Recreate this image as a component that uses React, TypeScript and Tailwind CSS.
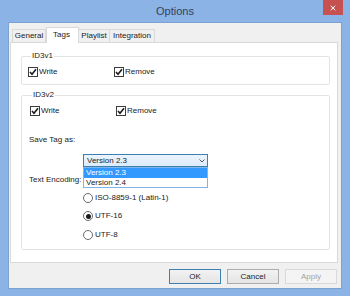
import { X } from 'lucide-react';

const Check = () => (
  <span className="w-[10px] h-[10px] border border-[#3c3c3c] bg-white flex items-center justify-center shrink-0">
    <svg width="8" height="8" viewBox="0 0 8 8">
      <path d="M1 4 L3 6.2 L7 1.2" fill="none" stroke="#1a1a1a" strokeWidth="1.6" />
    </svg>
  </span>
);

const Radio = ({ on }: { on?: boolean }) => (
  <span className="w-[10px] h-[10px] rounded-full border border-[#6b6b6b] bg-white flex items-center justify-center shrink-0">
    {on && <span className="w-[5px] h-[5px] rounded-full bg-[#1c1c1c]" />}
  </span>
);

const CheckRow = ({ first }: { first: string }) => (
  <div className="flex items-center h-[10px]">
    <div className="flex items-center gap-[1px] w-[86px]">
      <Check />
      <span>{first}</span>
    </div>
    <div className="flex items-center gap-[1px]">
      <Check />
      <span>Remove</span>
    </div>
  </div>
);

const tabs = ['General', 'Tags', 'Playlist', 'Integration'];

const App = () => {
  return (
    <div
      className="w-[350px] h-[296px] bg-[#8cb3e6] flex flex-col px-[8px] pb-[7px] text-[8px] leading-[10px] text-[#222]"
      style={{ fontFamily: '"Liberation Sans", Arial, sans-serif' }}
    >
      {/* Title bar */}
      <div className="h-[22px] relative flex items-center justify-center">
        <span className="text-[11px] text-[#34425a] -mt-[1px]">Options</span>
        <div className="absolute right-[-1px] top-0 w-[20px] h-[15px] bg-[#c75050] flex items-center justify-center">
          <X className="w-[8px] h-[8px] text-white" strokeWidth={3} />
        </div>
      </div>

      {/* Client area */}
      <div className="flex-1 bg-[#f0f0f0] border border-[#7ea2d0] flex flex-col pt-[4px] pl-[1px] pr-[3px] pb-[4px]">
        {/* Tabs */}
        <div className="flex items-end h-[15px] pl-[2px] relative z-10">
          {tabs.map((t) => (
            <div
              key={t}
              className={
                t === 'Tags'
                  ? 'h-[16px] -mb-[1px] bg-white border border-b-0 border-[#d9d9d9] px-[6px] pt-[2px] w-[33px] flex justify-start'
                  : 'h-[13px] bg-[#f0f0f0] border border-b-0 border-[#d9d9d9] px-[3px] flex items-center justify-center ' +
                    (t === 'General' ? 'w-[34px]' : t === 'Playlist' ? 'w-[31px] border-l-0' : 'w-[45px] border-l-0')
              }
            >
              {t}
            </div>
          ))}
        </div>

        {/* Panel */}
        <div className="h-[221px] bg-white border border-[#d9d9d9] pl-[10px] pr-[7px] pt-[8px]">
          <fieldset className="border border-[#e3e3e3] rounded-[2px] pl-[6px] pt-[6px] pb-[7px]">
            <legend className="px-[1px] ml-[3px] leading-[10px]">ID3v1</legend>
            <CheckRow first="Write" />
          </fieldset>

          <fieldset className="mt-[5px] border border-[#e3e3e3] rounded-[2px] pl-[7px] pt-[6px] pb-[9px]">
            <legend className="px-[1px] ml-[3px] leading-[10px]">ID3v2</legend>
            <div className="ml-[1px]">
              <CheckRow first="Write" />
            </div>
            <div className="mt-[19px]">Save Tag as:</div>

            <div className="relative ml-[54px] mt-[9px] w-[125px]">
              <div className="h-[13px] border border-[#3c7fb1] bg-gradient-to-b from-[#ecf4fc] to-[#dcecfc] flex items-center justify-between pl-[3px] pr-[2px]">
                <span>Version 2.3</span>
                <svg width="6" height="4" viewBox="0 0 6 4">
                  <path d="M0.5 0.5 L3 3 L5.5 0.5" fill="none" stroke="#555" strokeWidth="1" />
                </svg>
              </div>
              <div className="absolute left-0 top-[13px] w-[125px] bg-white border border-[#7eb4ea] z-20">
                <div className="h-[10px] bg-[#3399ff] text-white pl-[2px] flex items-center">Version 2.3</div>
                <div className="h-[9px] pl-[2px] flex items-center">Version 2.4</div>
              </div>
            </div>

            <div className="mt-[8px]">Text Encoding:</div>

            <div className="ml-[54px] mt-[8px] flex flex-col gap-[8px]">
              <div className="flex items-center gap-[2px] h-[10px]">
                <Radio />
                <span>ISO-8859-1 (Latin-1)</span>
              </div>
              <div className="flex items-center gap-[2px] h-[10px]">
                <Radio on />
                <span>UTF-16</span>
              </div>
              <div className="flex items-center gap-[2px] h-[10px] mt-[1px]">
                <Radio />
                <span>UTF-8</span>
              </div>
            </div>
          </fieldset>
        </div>

        {/* Buttons */}
        <div className="flex justify-end gap-[6px] mt-[6px] pr-[1px]">
          <button className="w-[52px] h-[15px] border border-[#3c7fb1] bg-gradient-to-b from-[#f2f2f2] to-[#e5e5e5] flex items-center justify-center">
            OK
          </button>
          <button className="w-[52px] h-[15px] border border-[#acacac] bg-gradient-to-b from-[#f2f2f2] to-[#e5e5e5] flex items-center justify-center">
            Cancel
          </button>
          <button className="w-[52px] h-[15px] border border-[#d9d9d9] bg-[#f4f4f4] text-[#a3a3a3] flex items-center justify-center">
            Apply
          </button>
        </div>
      </div>
    </div>
  );
};

export default App;
